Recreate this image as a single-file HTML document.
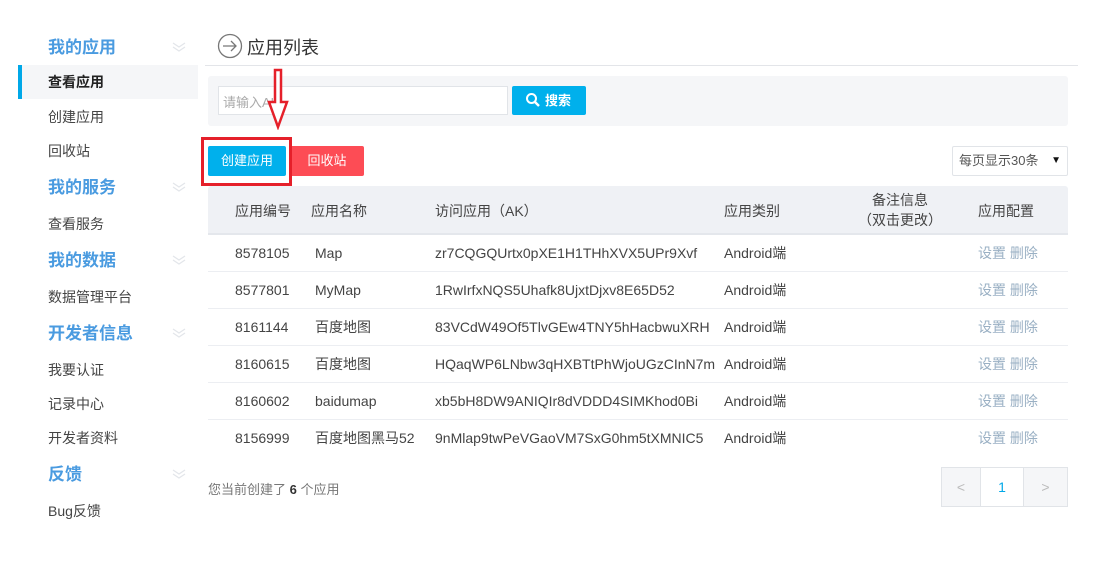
<!DOCTYPE html><html><head><meta charset="utf-8"><style>
*{margin:0;padding:0;box-sizing:border-box}
body{width:1099px;height:572px;background:#fff;font-family:"Liberation Sans","Noto Sans CJK SC",sans-serif;font-size:14px;color:#444;position:relative;overflow:hidden}
.a{position:absolute;white-space:nowrap}
.h{color:#4a9be0;font-size:17px;font-weight:bold;left:48px}
.chev{position:absolute;left:172px;width:14px;height:10px}
.it{left:48px;font-size:14px;color:#444}
.r{position:absolute;left:208px;width:860px;height:37px;border-bottom:1px solid #eceef2}
.r span{position:absolute;top:0;height:37px;line-height:37px;white-space:nowrap}
.c1{left:27px}.c2{left:107px}.c3{left:227px}.c4{left:516px}.c5{left:770px;color:#9ab0c4}
</style></head><body>
<div class="a h" style="top:33px">我的应用</div>
<div class="a h" style="top:173px">我的服务</div>
<div class="a h" style="top:246px">我的数据</div>
<div class="a h" style="top:319px">开发者信息</div>
<div class="a h" style="top:460px">反馈</div>
<svg class="chev" style="top:42px" viewBox="0 0 14 10"><path d="M1 1l6 4 6-4M1 5l6 4 6-4" fill="none" stroke="#e3e6ea" stroke-width="1.3"/></svg>
<svg class="chev" style="top:182px" viewBox="0 0 14 10"><path d="M1 1l6 4 6-4M1 5l6 4 6-4" fill="none" stroke="#e3e6ea" stroke-width="1.3"/></svg>
<svg class="chev" style="top:255px" viewBox="0 0 14 10"><path d="M1 1l6 4 6-4M1 5l6 4 6-4" fill="none" stroke="#e3e6ea" stroke-width="1.3"/></svg>
<svg class="chev" style="top:328px" viewBox="0 0 14 10"><path d="M1 1l6 4 6-4M1 5l6 4 6-4" fill="none" stroke="#e3e6ea" stroke-width="1.3"/></svg>
<svg class="chev" style="top:469px" viewBox="0 0 14 10"><path d="M1 1l6 4 6-4M1 5l6 4 6-4" fill="none" stroke="#e3e6ea" stroke-width="1.3"/></svg>
<div class="a" style="left:18px;top:65px;width:180px;height:34px;background:#f5f6f8;border-left:4px solid #00a8e8"></div>
<div class="a it" style="top:72px;font-weight:bold;color:#222">查看应用</div>
<div class="a it" style="top:107px">创建应用</div>
<div class="a it" style="top:141px">回收站</div>
<div class="a it" style="top:214px">查看服务</div>
<div class="a it" style="top:287px">数据管理平台</div>
<div class="a it" style="top:360px">我要认证</div>
<div class="a it" style="top:394px">记录中心</div>
<div class="a it" style="top:428px">开发者资料</div>
<div class="a it" style="top:501px">Bug反馈</div>

<svg class="a" style="left:217px;top:33px" width="26" height="26" viewBox="0 0 26 26"><circle cx="13" cy="13" r="11.5" fill="none" stroke="#777" stroke-width="1.3"/><path d="M6 13h13M14 8l5 5-5 5" fill="none" stroke="#777" stroke-width="1.3"/></svg>
<div class="a" style="left:247px;top:34px;font-size:18px;color:#333">应用列表</div>
<div class="a" style="left:205px;top:65px;width:873px;height:1px;background:#e3e5e9"></div>
<div class="a" style="left:208px;top:76px;width:860px;height:50px;background:#f5f6f8;border-radius:3px"></div>
<div class="a" style="left:218px;top:86px;width:290px;height:29px;background:#fff;border:1px solid #e1e4e8"></div>
<div class="a" style="left:223px;top:92px;font-size:13px;color:#aaa">请输入AK</div>
<div class="a" style="left:512px;top:86px;width:74px;height:29px;background:#00b0ec;border-radius:2px;color:#fff;font-weight:bold;font-size:13px;line-height:29px;padding-left:33px">搜索</div>
<svg class="a" style="left:525px;top:92px" width="16" height="16" viewBox="0 0 16 16"><circle cx="6.5" cy="6.5" r="4.5" fill="none" stroke="#fff" stroke-width="2"/><path d="M10 10l4 4" stroke="#fff" stroke-width="2.4"/></svg>
<svg class="a" style="left:266px;top:68px" width="24" height="62" viewBox="0 0 24 62"><path d="M9 2h6v32h6L12 59 3 34h6z" fill="#fff" stroke="#e5202a" stroke-width="2.5"/></svg>

<div class="a" style="left:208px;top:146px;width:78px;height:30px;background:#00b0ec;border-radius:2px;color:#fff;font-size:13px;line-height:30px;text-align:center">创建应用</div>
<div class="a" style="left:290px;top:146px;width:74px;height:30px;background:#fd4c55;border-radius:2px;color:#fff;font-size:13px;line-height:30px;text-align:center">回收站</div>
<div class="a" style="left:201px;top:137px;width:91px;height:49px;border:3px solid #e5202a"></div>
<div class="a" style="left:952px;top:146px;width:116px;height:30px;border:1px solid #e1e4e8;border-radius:2px;font-size:13px;line-height:28px;padding-left:6px;color:#555">每页显示30条<span style="position:absolute;right:6px;font-size:10px;color:#111">▼</span></div>

<div class="a" style="left:208px;top:186px;width:860px;height:49px;background:#eff1f5;border-bottom:2px solid #e4e7ec;border-radius:3px 3px 0 0">
<span class="a" style="left:27px;top:15px">应用编号</span><span class="a" style="left:103px;top:15px">应用名称</span><span class="a" style="left:227px;top:15px">访问应用（AK）</span><span class="a" style="left:516px;top:15px">应用类别</span><span class="a" style="left:650px;top:4px;text-align:center;line-height:20px">备注信息<br>（双击更改）</span><span class="a" style="left:770px;top:15px">应用配置</span></div>

<div class="r" style="top:235px"><span class="c1">8578105</span><span class="c2">Map</span><span class="c3">zr7CQGQUrtx0pXE1H1THhXVX5UPr9Xvf</span><span class="c4">Android端</span><span class="c5">设置 删除</span></div>
<div class="r" style="top:272px"><span class="c1">8577801</span><span class="c2">MyMap</span><span class="c3">1RwIrfxNQS5Uhafk8UjxtDjxv8E65D52</span><span class="c4">Android端</span><span class="c5">设置 删除</span></div>
<div class="r" style="top:309px"><span class="c1">8161144</span><span class="c2">百度地图</span><span class="c3">83VCdW49Of5TlvGEw4TNY5hHacbwuXRH</span><span class="c4">Android端</span><span class="c5">设置 删除</span></div>
<div class="r" style="top:346px"><span class="c1">8160615</span><span class="c2">百度地图</span><span class="c3">HQaqWP6LNbw3qHXBTtPhWjoUGzCInN7m</span><span class="c4">Android端</span><span class="c5">设置 删除</span></div>
<div class="r" style="top:383px"><span class="c1">8160602</span><span class="c2">baidumap</span><span class="c3">xb5bH8DW9ANIQIr8dVDDD4SIMKhod0Bi</span><span class="c4">Android端</span><span class="c5">设置 删除</span></div>
<div class="r" style="top:420px;border-bottom:none"><span class="c1">8156999</span><span class="c2">百度地图黑马52</span><span class="c3">9nMlap9twPeVGaoVM7SxG0hm5tXMNIC5</span><span class="c4">Android端</span><span class="c5">设置 删除</span></div>

<div class="a" style="left:208px;top:479px;font-size:13px;color:#777">您当前创建了 <b style="color:#333">6</b> 个应用</div>
<div class="a" style="left:941px;top:467px;width:127px;height:40px;border:1px solid #e1e4e8;background:#f5f6f8;display:flex">
<div style="width:39px;text-align:center;line-height:38px;color:#bbb;border-right:1px solid #e1e4e8">&lt;</div>
<div style="width:43px;text-align:center;line-height:38px;color:#00a8e8;background:#fff;border-right:1px solid #e1e4e8">1</div>
<div style="flex:1;text-align:center;line-height:38px;color:#bbb">&gt;</div></div>
</body></html>
